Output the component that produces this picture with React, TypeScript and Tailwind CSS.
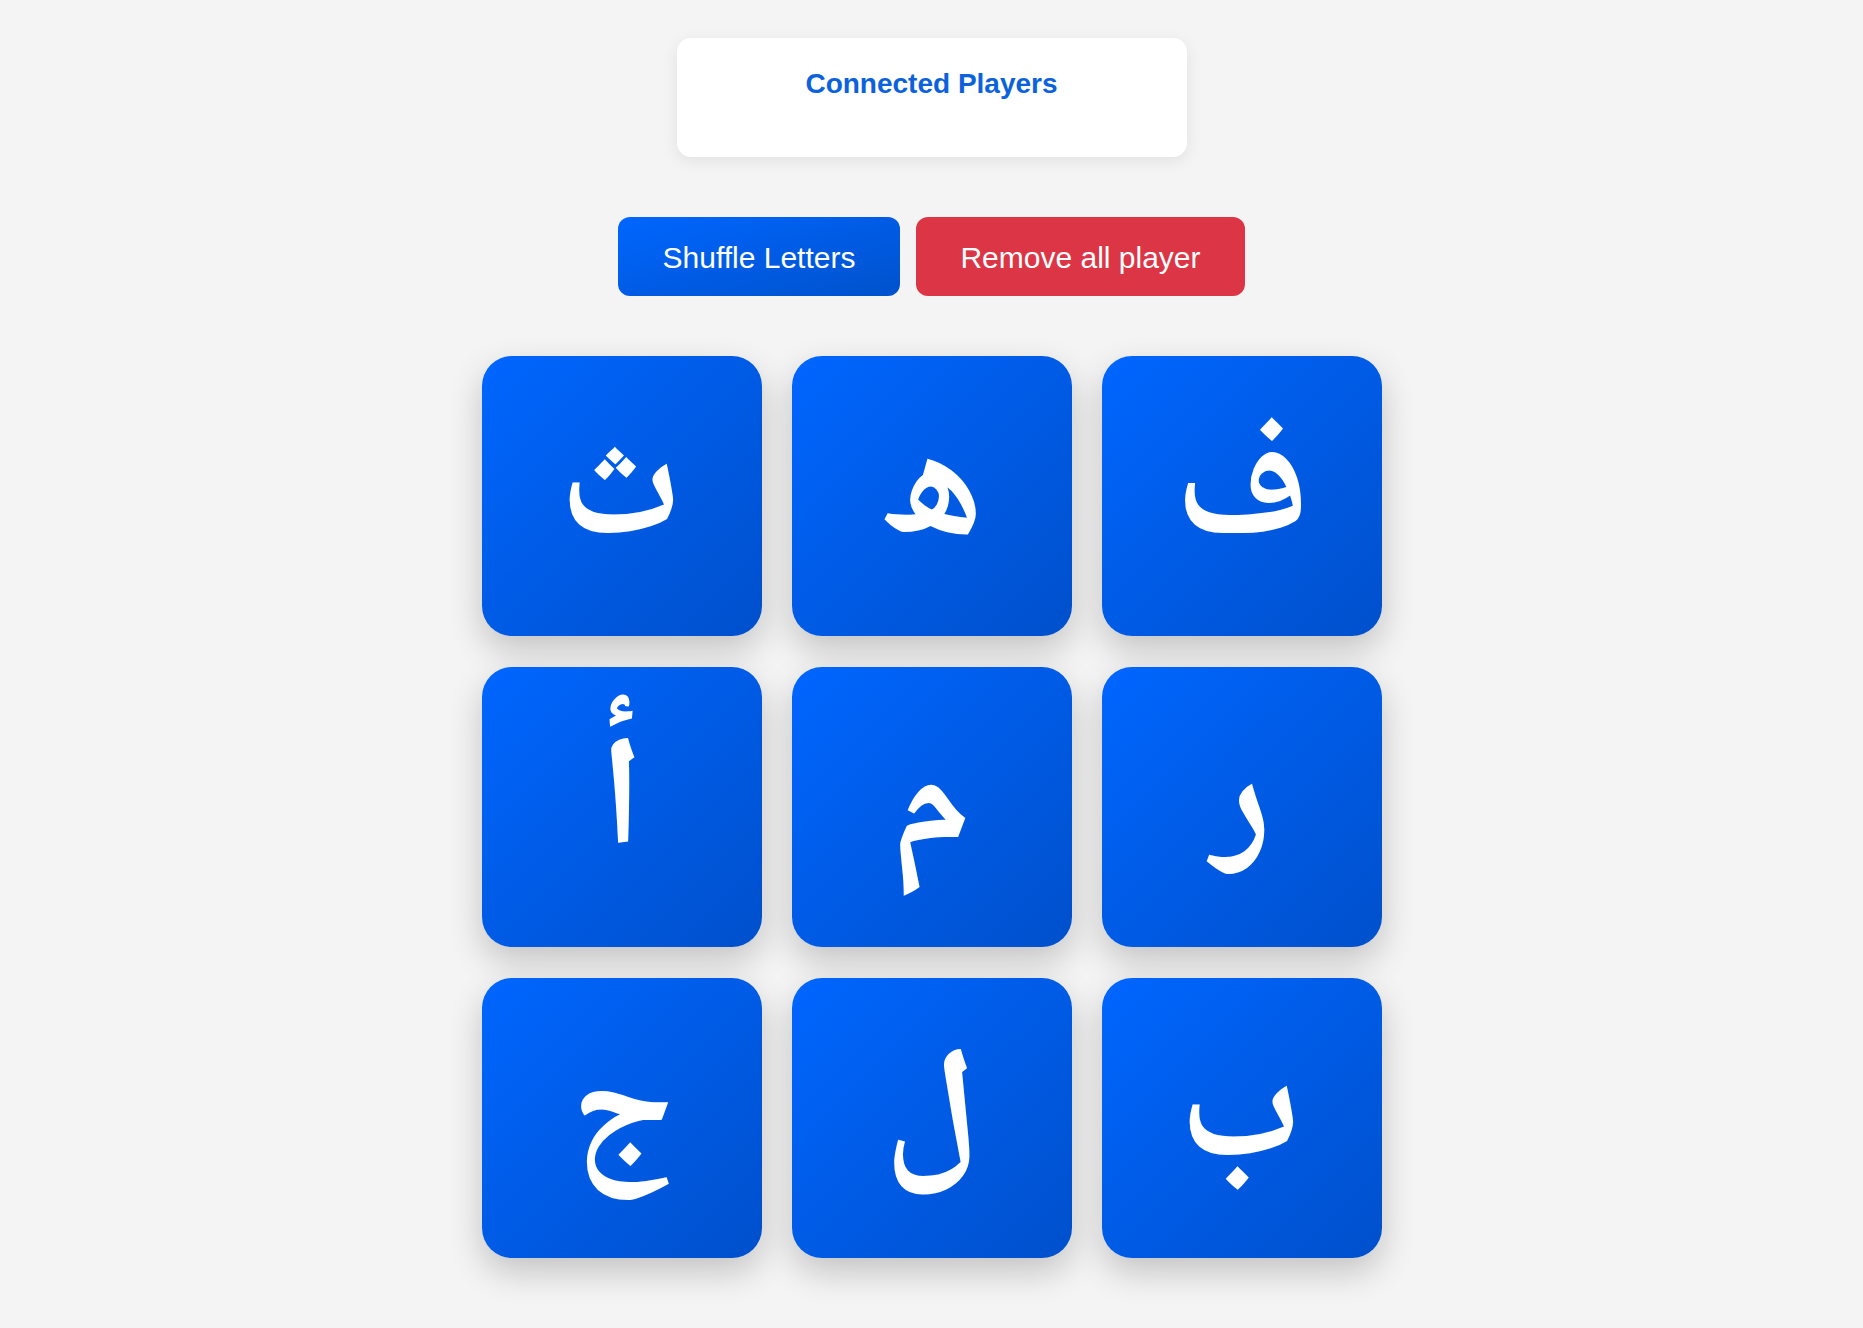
const letters = ["ث", "ه", "ف", "أ", "م", "ر", "ج", "ل", "ب"]

export default function App() {
  return (
    <div className="min-h-screen bg-[#f4f4f4] flex flex-col items-center pt-[38px] pb-16" style={{ fontFamily: "'Liberation Sans', Arial, sans-serif" }}>
      {/* players panel */}
      <div className="w-[510px] h-[119px] bg-white rounded-[14px] shadow-[0_4px_16px_rgba(0,0,0,0.08)] pt-[29px] flex flex-col items-center">
        <h2 className="text-[28px] font-bold text-[#0b62dc] leading-[34px]">Connected Players</h2>
      </div>

      {/* actions */}
      <div className="mt-[60px] flex gap-[16px]">
        <button className="w-[282px] h-[79px] pt-[1px] rounded-[12px] bg-gradient-to-br from-[#0066ff] to-[#0052cc] text-white text-[30px]">
          Shuffle Letters
        </button>
        <button className="w-[329px] h-[79px] pt-[1px] rounded-[12px] bg-[#dc3545] text-white text-[30px]">
          Remove all player
        </button>
      </div>

      {/* letters */}
      <div className="mt-[60px] grid grid-cols-3 gap-x-[30px] gap-y-[31px]">
        {letters.map((l) => (
          <div
            key={l}
            className="w-[280px] h-[280px] rounded-[30px] bg-gradient-to-br from-[#0066ff] to-[#0050cc] shadow-[0_14px_34px_rgba(0,0,0,0.2)] flex items-center justify-center pt-[6px] text-white font-bold text-[156px] leading-none"
            style={{ fontFamily: "'Noto Naskh Arabic', 'Noto Sans Arabic', 'DejaVu Sans', sans-serif" }}
          >
            {l}
          </div>
        ))}
      </div>
    </div>
  )
}
